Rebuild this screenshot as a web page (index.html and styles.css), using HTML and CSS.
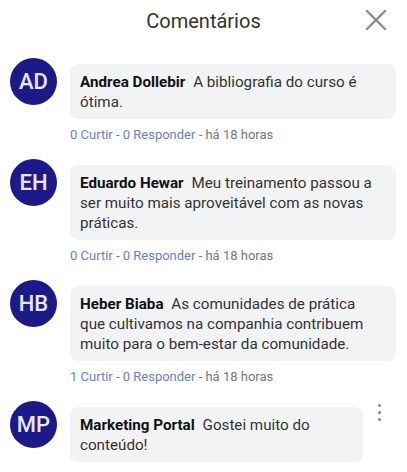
FILE: index.html
```html
<!DOCTYPE html>
<html lang="pt-BR">
<head>
  <meta charset="UTF-8" />
  <meta name="viewport" content="width=device-width, initial-scale=1.0"/>
  <title>Comentários</title>
  <link rel="stylesheet" href="styles.css">
</head>
<body>
  <header class="header">
    <h1>Comentários</h1>
    <button class="close" aria-label="Fechar">
      <svg width="22" height="22" viewBox="0 0 22 22">
        <path d="M2 2 L20 20 M20 2 L2 20" stroke="#8a8a8a" stroke-width="2.4" stroke-linecap="round" fill="none"/>
      </svg>
    </button>
  </header>

  <ul class="comments">
    <li class="comment">
      <div class="avatar">AD</div>
      <div class="body">
        <div class="bubble"><b>Andrea Dollebir</b> A bibliografia do curso é ótima.</div>
        <p class="meta"><a href="#">0 Curtir</a> - <a href="#">0 Responder</a> - há 18 horas</p>
      </div>
    </li>
    <li class="comment">
      <div class="avatar">EH</div>
      <div class="body">
        <div class="bubble"><b>Eduardo Hewar</b> Meu treinamento passou a ser muito mais aproveitável com as novas práticas.</div>
        <p class="meta"><a href="#">0 Curtir</a> - <a href="#">0 Responder</a> - há 18 horas</p>
      </div>
    </li>
    <li class="comment">
      <div class="avatar">HB</div>
      <div class="body">
        <div class="bubble"><b>Heber Biaba</b> As comunidades de prática que cultivamos na companhia contribuem muito para o bem-estar da comunidade.</div>
        <p class="meta"><a href="#">1 Curtir</a> - <a href="#">0 Responder</a> - há 18 horas</p>
      </div>
    </li>
    <li class="comment">
      <div class="avatar">MP</div>
      <div class="body">
        <div class="row">
          <div class="bubble"><b>Marketing Portal</b> Gostei muito do conteúdo!</div>
          <button class="more" aria-label="Opções"><span></span><span></span><span></span></button>
        </div>
        <p class="meta"><a href="#">0 Curtir</a> - <a href="#">0 Responder</a> - há 18 horas</p>
      </div>
    </li>
  </ul>
</body>
</html>
```

FILE: styles.css
```css
* {
  box-sizing: border-box;
  margin: 0;
  padding: 0;
  font-family: Roboto, 'Noto Sans', sans-serif;
}

body {
  background: #fff;
  color: #333;
  overflow: hidden;
}

.header {
  position: relative;
  height: 42px;
  display: flex;
  align-items: center;
  justify-content: center;
}

.header h1 {
  font-size: 20px;
  font-weight: 400;
  color: #333;
}

.close {
  position: absolute;
  right: 20px;
  top: 9px;
  background: none;
  border: none;
  width: 22px;
  height: 22px;
}

.comments {
  list-style: none;
  padding: 16px 11px 0 10px;
}

.comment {
  display: flex;
  gap: 13px;
  margin-bottom: 16px;
}

.avatar {
  flex: none;
  width: 47px;
  height: 47px;
  border-radius: 50%;
  background: #1c1a88;
  color: #e8e6f7;
  font-size: 22px;
  font-weight: 500;
  display: flex;
  align-items: center;
  justify-content: center;
}

.body {
  flex: 1;
  padding-top: 6px;
}

.bubble {
  background: #f2f3f5;
  border-radius: 8px;
  padding: 8px 22px 7px 10px;
  font-size: 15.2px;
  line-height: 20px;
  color: #333;
}

.bubble b {
  color: #111;
  font-weight: 700;
  margin-right: 4px;
}

.row {
  display: flex;
  align-items: flex-start;
}

.row .bubble {
  flex: 1;
}

.more {
  flex: none;
  width: 33px;
  display: flex;
  flex-direction: column;
  align-items: center;
  gap: 4px;
  background: none;
  border: none;
  margin-top: -3px;
}

.more span {
  width: 3px;
  height: 3px;
  border-radius: 50%;
  background: #888;
}

.meta {
  margin-top: 8px;
  font-size: 13px;
  line-height: 16px;
  color: #777;
}

.meta a {
  color: #6a7ecf;
  text-decoration: none;
}
```
